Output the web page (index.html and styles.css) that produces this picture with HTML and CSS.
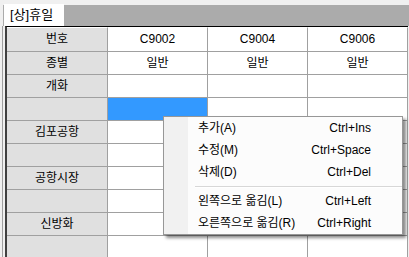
FILE: index.html
```html
<!DOCTYPE html>
<html lang="ko">

<head>
   <meta charset="UTF-8">
   <meta name="viewport" content="width=device-width, initial-scale=1.0">
   <title>휴일</title>
   <link rel="stylesheet" href="styles.css">
</head>

<body>
   <div class="tabbar">
      <span class="tab">[상]휴일</span>
   </div>
   <div class="sheet">
      <div class="grid">
         <div class="hd first">번호</div>
         <div class="cell first">C9002</div>
         <div class="cell first">C9004</div>
         <div class="cell first">C9006</div>

         <div class="hd">종별</div>
         <div class="cell">일반</div>
         <div class="cell">일반</div>
         <div class="cell">일반</div>

         <div class="hd">개화</div>
         <div class="cell"></div>
         <div class="cell"></div>
         <div class="cell"></div>

         <div class="hd"></div>
         <div class="cell selected"></div>
         <div class="cell"></div>
         <div class="cell"></div>

         <div class="hd">김포공항</div>
         <div class="cell"></div>
         <div class="cell"></div>
         <div class="cell"></div>

         <div class="hd"></div>
         <div class="cell"></div>
         <div class="cell"></div>
         <div class="cell"></div>

         <div class="hd">공항시장</div>
         <div class="cell"></div>
         <div class="cell"></div>
         <div class="cell"></div>

         <div class="hd"></div>
         <div class="cell"></div>
         <div class="cell"></div>
         <div class="cell"></div>

         <div class="hd">신방화</div>
         <div class="cell"></div>
         <div class="cell"></div>
         <div class="cell"></div>

         <div class="hd"></div>
         <div class="cell"></div>
         <div class="cell"></div>
         <div class="cell"></div>
      </div>
   </div>

   <!-- 우클릭 메뉴 -->
   <ul class="menu">
      <li><span>추가(A)</span><span>Ctrl+Ins</span></li>
      <li><span>수정(M)</span><span>Ctrl+Space</span></li>
      <li><span>삭제(D)</span><span>Ctrl+Del</span></li>
      <li class="sep"></li>
      <li><span>왼쪽으로 옮김(L)</span><span>Ctrl+Left</span></li>
      <li><span>오른쪽으로 옮김(R)</span><span>Ctrl+Right</span></li>
   </ul>
</body>

</html>
```

FILE: styles.css
```css
* {
   box-sizing: border-box;
}

html,
body {
   margin: 0;
   height: 257px;
   overflow: hidden;
}

body {
   position: relative;
   background-color: #f0f0f0;
   color: #000;
   font: 12px "Liberation Sans", "Noto Sans CJK KR", sans-serif;
   padding-top: 5px;
}

.tabbar {
   display: flex;
   height: 21px;
   margin-left: 3px;
   background-color: #ababab;
}

.tab {
   display: block;
   width: 60px;
   height: 22px;
   margin: -1px 0 0 1px;
   padding-left: 6px;
   background-color: #fff;
   font-size: 13px;
   line-height: 22px;
}

.sheet {
   margin-left: 2px;
   padding-left: 2px;
   border-left: 1px solid #a0a0a0;
}

.grid {
   display: grid;
   grid-template-columns: 101px 100px 100px 100px;
   grid-template-rows: 25px;
   grid-auto-rows: 23px;
   border-top: 1px solid #000;
   border-left: 2px solid #404040;
   background-color: #fff;
   width: 403px;
}

.hd,
.cell {
   border-right: 1px solid #a0a0a0;
   border-bottom: 1px solid #a0a0a0;
   text-align: center;
   line-height: 22px;
}

.hd {
   background-color: #e0e0e0;
}

.first {
   border-top: 1px solid #fff;
   line-height: 23px;
}

.cell.selected {
   background-color: #3399ff;
}

.menu {
   position: absolute;
   left: 163px;
   top: 116px;
   width: 240px;
   margin: 0;
   padding: 0;
   list-style: none;
   border: 1px solid #979797;
   background: linear-gradient(to right, #f1f1f1 24px, #fcfcfc 24px);
   box-shadow: 3px 3px 3px rgba(0, 0, 0, 0.45);
}

.menu li {
   display: flex;
   justify-content: space-between;
   height: 22px;
   line-height: 22px;
   padding: 0 31px 0 34px;
}

.menu li.sep {
   height: 7px;
   margin-left: 31px;
   padding: 0;
   border-top: 3px solid transparent;
   background: linear-gradient(#d7d7d7 1px, #fff 1px, #fff 2px, transparent 2px);
   background-clip: padding-box;
}
```
